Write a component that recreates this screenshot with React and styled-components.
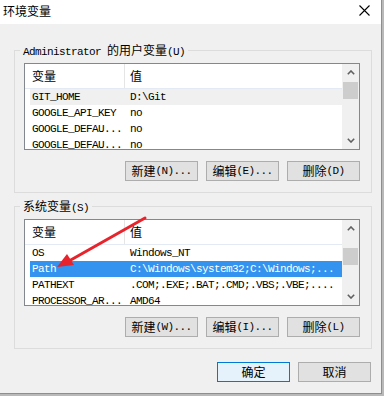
import React from "react";
import styled, { createGlobalStyle } from "styled-components";

const Global = createGlobalStyle`
  html, body { margin: 0; padding: 0; }
  body {
    background: #b9b9b9;
    width: 384px;
    height: 396px;
    overflow: hidden;
    font-family: "Liberation Mono", "Noto Sans CJK SC", monospace;
    font-size: 11px;
    letter-spacing: -0.6px;
    color: #000;
  }
  * { box-sizing: border-box; }
`;

const Window = styled.div`
  position: relative;
  width: 382px;
  height: 394px;
  background: #f0f0f0;
  border-right: 1px solid #6f93c6;
  border-bottom: 1px solid #6f93c6;
  display: flex;
  flex-direction: column;
`;

const TitleBar = styled.div`
  height: 24px;
  background: #fff;
  display: flex;
  align-items: center;
  justify-content: space-between;
  padding: 0 11px 3px 3px;
`;

const Zh = styled.span`
  font-family: "Noto Sans CJK SC", sans-serif;
  font-size: 12px;
  letter-spacing: 0;
`;

const Content = styled.div`
  display: flex;
  flex-direction: column;
  padding: 26px 0 0 14px;
  gap: 13px;
`;

const Group = styled.div`
  position: relative;
  width: 358px;
  border: 1px solid #dcdcdc;
  padding: 12px 11px 11px 9px;
  display: flex;
  flex-direction: column;
  gap: 11px;
`;

const Legend = styled.div`
  position: absolute;
  top: -9px;
  left: 5px;
  padding: 0 3px;
  line-height: 16px;
  height: 16px;
  background: #f0f0f0;
  white-space: nowrap;
`;

const List = styled.div`
  height: 87px;
  border: 1px solid #828790;
  background: #fff;
  display: grid;
  grid-template-columns: 1fr 17px;
  overflow: hidden;
`;

const Pane = styled.div`
  display: flex;
  flex-direction: column;
  overflow: hidden;
`;

const Header = styled.div`
  height: 25px;
  flex: none;
  display: flex;
  border-bottom: 1px solid #e3eaf4;
  background: #fff;
`;

const HeadCell = styled.div`
  display: flex;
  align-items: center;
  width: ${(p) => (p.$first ? "100px" : "auto")};
  flex: ${(p) => (p.$first ? "none" : "1")};
  padding-left: ${(p) => (p.$first ? "7px" : "5px")};
  border-right: ${(p) => (p.$first ? "1px solid #e5e5e5" : "none")};
  padding-bottom: 1px;
`;

const Row = styled.div`
  flex: none;
  height: 16px;
  margin-left: 5px;
  display: grid;
  grid-template-columns: 98px 1fr;
  line-height: 16px;
  background: ${(p) =>
    p.$state === "selected" ? "#3393ee" : p.$state === "soft" ? "#f0f0f0" : "transparent"};
  color: ${(p) => (p.$state === "selected" ? "#fff" : "#000")};
`;

const Cell = styled.div`
  padding-left: 2px;
  white-space: nowrap;
  overflow: hidden;
`;

const ScrollBar = styled.div`
  background: #f0f0f0;
  display: flex;
  flex-direction: column;
`;

const ArrowBox = styled.div`
  height: 17px;
  flex: none;
  display: flex;
  align-items: center;
  justify-content: center;
`;

const Track = styled.div`
  flex: 1;
  padding: 0 1px;
`;

const Thumb = styled.div`
  height: 17px;
  background: #cdcdcd;
  margin-top: ${(p) => p.$offset}px;
`;

const ButtonRow = styled.div`
  display: flex;
  justify-content: flex-end;
  gap: 8px;
  padding-right: ${(p) => p.$pr || 0}px;
`;

const Button = styled.div`
  width: 73px;
  height: 20px;
  display: flex;
  align-items: center;
  justify-content: center;
  border: 1px solid ${(p) => (p.$default ? "#0078d7" : "#adadad")};
  background: ${(p) => (p.$default ? "#e5f1fb" : "#e1e1e1")};
  white-space: nowrap;
  line-height: 18px;
`;

const Overlay = styled.svg`
  position: absolute;
  left: 0;
  top: 0;
  pointer-events: none;
`;

const Chevron = ({ down }) => (
  <svg width="8" height="5" viewBox="0 0 8 5">
    <path
      d={down ? "M0.8 0.8 L4 4 L7.2 0.8" : "M0.8 4.2 L4 1 L7.2 4.2"}
      fill="none"
      stroke="#606060"
      strokeWidth="1.6"
    />
  </svg>
);

const VarList = ({ rows, thumb }) => (
  <List>
    <Pane>
      <Header>
        <HeadCell $first>
          <Zh>变量</Zh>
        </HeadCell>
        <HeadCell>
          <Zh>值</Zh>
        </HeadCell>
      </Header>
      {rows.map((r, i) => (
        <Row key={i} $state={r.state}>
          <Cell>{r.name}</Cell>
          <Cell>{r.value}</Cell>
        </Row>
      ))}
    </Pane>
    <ScrollBar>
      <ArrowBox>
        <Chevron />
      </ArrowBox>
      <Track>
        <Thumb $offset={thumb} />
      </Track>
      <ArrowBox>
        <Chevron down />
      </ArrowBox>
    </ScrollBar>
  </List>
);

const Btn = ({ zh, rest, ...p }) => (
  <Button {...p}>
    <Zh>{zh}</Zh>
    {rest}
  </Button>
);

const userRows = [
  { name: "GIT_HOME", value: "D:\\Git", state: "soft" },
  { name: "GOOGLE_API_KEY", value: "no" },
  { name: "GOOGLE_DEFAU...", value: "no" },
  { name: "GOOGLE_DEFAU...", value: "no" },
];

const sysRows = [
  { name: "OS", value: "Windows_NT" },
  { name: "Path", value: "C:\\Windows\\system32;C:\\Windows;...", state: "selected" },
  { name: "PATHEXT", value: ".COM;.EXE;.BAT;.CMD;.VBS;.VBE;...." },
  { name: "PROCESSOR_AR...", value: "AMD64" },
];

export default function App() {
  return (
    <>
      <Global />
      <Window>
        <TitleBar>
          <Zh>环境变量</Zh>
          <svg width="11" height="11" viewBox="0 0 11 11">
            <path d="M0.5 0.5 L10.5 10.5 M10.5 0.5 L0.5 10.5" stroke="#000" strokeWidth="1.1" />
          </svg>
        </TitleBar>
        <Content>
          <Group>
            <Legend>
              Administrator <Zh>的用户变量</Zh>(U)
            </Legend>
            <VarList rows={userRows} thumb={1} />
            <ButtonRow>
              <Btn zh="新建" rest="(N)..." />
              <Btn zh="编辑" rest="(E)..." />
              <Btn zh="删除" rest="(D)" />
            </ButtonRow>
          </Group>
          <Group>
            <Legend>
              <Zh>系统变量</Zh>(S)
            </Legend>
            <VarList rows={sysRows} thumb={11} />
            <ButtonRow>
              <Btn zh="新建" rest="(W)..." />
              <Btn zh="编辑" rest="(I)..." />
              <Btn zh="删除" rest="(L)" />
            </ButtonRow>
          </Group>
          <ButtonRow $pr={1} style={{ width: 358 }}>
            <Btn zh="确定" $default />
            <Btn zh="取消" />
          </ButtonRow>
        </Content>
        <Overlay width="382" height="394" viewBox="0 0 382 394">
          <line x1="145" y1="218" x2="69" y2="261" stroke="#e8232b" strokeWidth="3" strokeLinecap="round" />
          <polygon points="57,267 67,254 74,265" fill="#e8232b" />
        </Overlay>
      </Window>
    </>
  );
}
